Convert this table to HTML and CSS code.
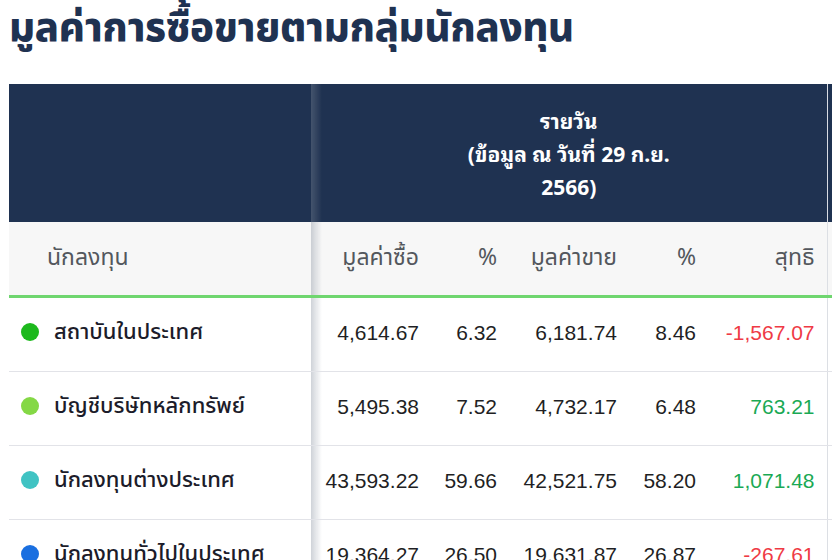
FILE: index.html
```html
<!DOCTYPE html>
<html lang="th">
<head>
<meta charset="utf-8">
<title>มูลค่าการซื้อขายตามกลุ่มนักลงทุน</title>
<link rel="stylesheet" href="styles.css">
</head>
<body>
<h1 class="title">มูลค่าการซื้อขายตามกลุ่มนักลงทุน</h1>
<div class="table-wrap">
  <table class="trade">
    <colgroup>
      <col class="c-name">
      <col class="c-w120">
      <col class="c-w78">
      <col class="c-w120">
      <col class="c-w79">
      <col class="c-w119">
      <col class="c-next">
    </colgroup>
    <thead>
      <tr class="group-row">
        <th class="sticky"></th>
        <th class="group" colspan="5"><span class="group-label">รายวัน<br><span class="group-sub">(ข้อมูล ณ วันที่ 29 ก.ย. 2566)</span></span></th>
        <th class="group next"></th>
      </tr>
      <tr class="col-row">
        <th class="sticky name-head">นักลงทุน</th>
        <th>มูลค่าซื้อ</th>
        <th>%</th>
        <th>มูลค่าขาย</th>
        <th>%</th>
        <th class="last">สุทธิ</th>
        <th></th>
      </tr>
    </thead>
    <tbody>
      <tr>
        <td class="sticky"><span class="inv"><span class="dot dot-inst"></span>สถาบันในประเทศ</span></td>
        <td>4,614.67</td><td>6.32</td><td>6,181.74</td><td>8.46</td><td class="last neg">-1,567.07</td><td></td>
      </tr>
      <tr>
        <td class="sticky"><span class="inv"><span class="dot dot-prop"></span>บัญชีบริษัทหลักทรัพย์</span></td>
        <td>5,495.38</td><td>7.52</td><td>4,732.17</td><td>6.48</td><td class="last pos">763.21</td><td></td>
      </tr>
      <tr>
        <td class="sticky"><span class="inv"><span class="dot dot-foreign"></span>นักลงทุนต่างประเทศ</span></td>
        <td>43,593.22</td><td>59.66</td><td>42,521.75</td><td>58.20</td><td class="last pos">1,071.48</td><td></td>
      </tr>
      <tr>
        <td class="sticky"><span class="inv"><span class="dot dot-local"></span>นักลงทุนทั่วไปในประเทศ</span></td>
        <td>19,364.27</td><td>26.50</td><td>19,631.87</td><td>26.87</td><td class="last neg">-267.61</td><td></td>
      </tr>
    </tbody>
  </table>
</div>
</body>
</html>
```
FILE: styles.css
```css
html, body {
  margin: 0;
  background: #ffffff;
}
body {
  padding: 0 0 0 9px;
  overflow: hidden;
  font-family: "Noto Sans Thai", "Noto Sans", sans-serif;
  color: #1c1c28;
}
.title {
  margin: 0 0 28px;
  padding-top: 2px;
  font-family: "Noto Sans Thai", sans-serif;
  font-weight: 800;
  font-size: 40px;
  line-height: 54px;
  color: #1f3251;
  letter-spacing: -0.3px;
}
.table-wrap {
  width: 100%;
  overflow: hidden;
}
.trade {
  border-collapse: collapse;
  table-layout: fixed;
  width: 1118px;
}
.c-name { width: 302px; }
.c-w120 { width: 120px; }
.c-w78 { width: 78px; }
.c-w79 { width: 79px; }
.c-w119 { width: 119px; }
.c-next { width: 300px; }

.sticky {
  position: sticky;
  left: 0;
  z-index: 2;
}
.sticky::after {
  content: "";
  position: absolute;
  top: 0;
  bottom: 0;
  right: -11px;
  width: 11px;
  background: linear-gradient(to right, rgba(130, 140, 155, 0.38), rgba(130, 140, 155, 0));
  pointer-events: none;
}

.group-row th {
  background: #1f3251;
  height: 138px;
  padding: 0;
}
.group-row .group {
  text-align: center;
  vertical-align: middle;
  color: #ffffff;
  font-family: "Noto Sans", "Noto Sans Thai Looped", sans-serif;
  font-weight: 700;
  font-size: 21px;
  line-height: 33px;
  border-right: 1px solid #d8dce3;
}
.group-label {
  display: inline-block;
  max-width: 230px;
  padding-top: 2px;
}

.col-row th {
  background: #f7f7f7;
  height: 71px;
  padding: 0 12px 2px 0;
  text-align: right;
  font-weight: 400;
  font-size: 23px;
  color: #53575d;
  border-bottom: 3px solid #6fd66f;
  vertical-align: middle;
}
.col-row th.last,
tbody td.last {
  border-right: 1px solid #dcdfe4;
}
.col-row .name-head {
  text-align: left;
  padding-left: 38px;
}

tbody td {
  height: 70px;
  padding: 0 12px 3px 0;
  text-align: right;
  vertical-align: middle;
  font-family: "Liberation Sans", Arial, sans-serif;
  font-size: 21px;
  color: #1f1f24;
  border-bottom: 1px solid #e2e3e8;
  background: #ffffff;
}
tbody td.sticky {
  text-align: left;
  padding-left: 12px;
}
.inv {
  display: flex;
  align-items: center;
  gap: 15px;
  font-family: "Noto Sans Thai", sans-serif;
  font-weight: 500;
  font-size: 22px;
  color: #1c1c2a;
  padding-bottom: 2px;
}
.dot {
  flex: none;
  width: 18px;
  height: 18px;
  border-radius: 50%;
}
.dot-inst { background: #1db91d; }
.dot-prop { background: #84d845; }
.dot-foreign { background: #40c3c3; }
.dot-local { background: #1a6fe0; }

.neg { color: #ef3a45; }
.pos { color: #1aa954; }
```
